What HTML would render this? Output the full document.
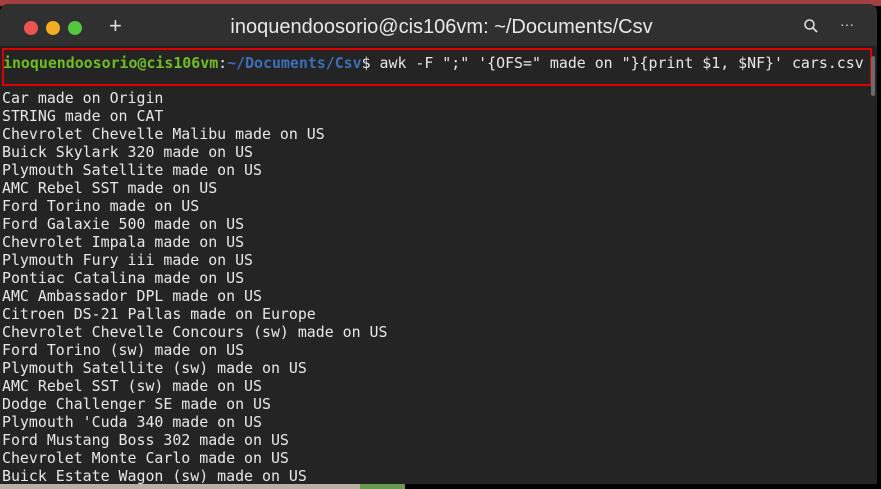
<!DOCTYPE html>
<html><head><style>
body{margin:0;width:881px;height:489px;background:#000;position:relative;overflow:hidden;font-family:"DejaVu Sans Mono","Liberation Mono",monospace}
.top{position:absolute;left:0;top:0;width:881px;height:6px;background:#a04040}
.bot{position:absolute;left:0;top:484px;width:360px;height:5px;background:#b8b0a8}
.bot2{position:absolute;left:360px;top:484px;width:45px;height:5px;background:#6a9a50}
.win{position:absolute;left:0;top:4px;width:877px;height:480px;background:#242424;border-radius:8px 8px 0 0;overflow:hidden}
.title{height:42px;background:#303030;position:relative;border-bottom:1px solid #1e1e1e}
.dot{position:absolute;top:17px;width:14px;height:14px;border-radius:50%}
.ttl{position:absolute;left:0;right:0;top:12px;text-align:center;color:#e8e8e8;font:20px "Liberation Sans",sans-serif;padding-left:6px}
.plus{position:absolute;left:109px;top:9px;color:#ddd;font:22px "Liberation Sans",sans-serif}
.term{position:absolute;left:2px;top:85px;color:#e8e8e8;font-size:14.9px;line-height:18px;white-space:pre}
.box{position:absolute;left:2px;top:44px;width:866px;height:34px;border:2px solid #e00000}
.prompt{position:absolute;left:3px;top:50px;font-size:14.9px;white-space:pre;color:#e8e8e8}
.sb{position:absolute;left:871px;top:52px;width:4px;height:40px;background:#6a6a6a;border-radius:2px}
</style></head><body>
<div class="top"></div><div class="bot"></div><div class="bot2"></div>
<div class="win">
<div class="title">
<div class="dot" style="left:24px;background:#ec5454"></div>
<div class="dot" style="left:46px;background:#f2ad22"></div>
<div class="dot" style="left:68px;background:#52c63f"></div>
<div class="plus">+</div>
<div class="ttl">inoquendoosorio@cis106vm: ~/Documents/Csv</div>
<svg style="position:absolute;left:803px;top:14px" width="16" height="16"><circle cx="6.5" cy="6.5" r="4.5" fill="none" stroke="#ddd" stroke-width="1.6"/><line x1="10" y1="10" x2="14" y2="14" stroke="#ddd" stroke-width="1.8"/></svg>
<div style="position:absolute;left:840px;top:12px;color:#ddd;font:14px 'Liberation Sans'">···</div>
</div>
<div class="box"></div>
<div class="prompt"><b style="color:#6fbf22">inoquendoosorio@cis106vm</b>:<b style="color:#3d6eb8">~/Documents/Csv</b>$ awk -F ";" '{OFS=" made on "}{print $1, $NF}' cars.csv</div>
<div class="sb"></div>
<div class="term">Car made on Origin
STRING made on CAT
Chevrolet Chevelle Malibu made on US
Buick Skylark 320 made on US
Plymouth Satellite made on US
AMC Rebel SST made on US
Ford Torino made on US
Ford Galaxie 500 made on US
Chevrolet Impala made on US
Plymouth Fury iii made on US
Pontiac Catalina made on US
AMC Ambassador DPL made on US
Citroen DS-21 Pallas made on Europe
Chevrolet Chevelle Concours (sw) made on US
Ford Torino (sw) made on US
Plymouth Satellite (sw) made on US
AMC Rebel SST (sw) made on US
Dodge Challenger SE made on US
Plymouth 'Cuda 340 made on US
Ford Mustang Boss 302 made on US
Chevrolet Monte Carlo made on US
Buick Estate Wagon (sw) made on US</div>
</div>
</body></html>
